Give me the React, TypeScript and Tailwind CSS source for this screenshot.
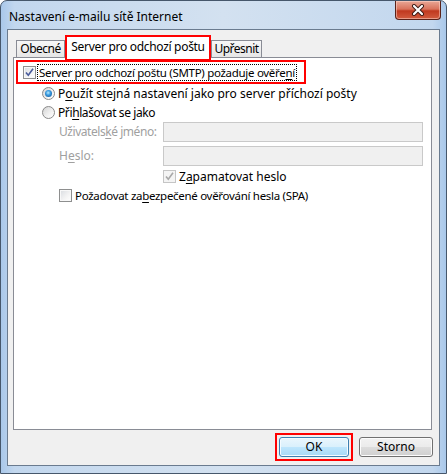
import type { ReactNode } from "react";

const font = { fontFamily: '"Noto Sans", "Open Sans", sans-serif' };

const Check = ({ checked, disabled }: { checked?: boolean; disabled?: boolean }) => (
  <span
    className={`flex h-[13px] w-[13px] shrink-0 items-center justify-center border ${
      disabled
        ? "border-[#c5c5c5] bg-[#f4f4f4]"
        : "border-[#8e8f8f] bg-[linear-gradient(135deg,#d8dbe0_0%,#f4f4f4_60%,#ffffff_100%)] shadow-[inset_0_0_0_1px_#f8f8f8]"
    }`}
  >
    {checked ? (
      <svg width="11" height="11" viewBox="0 0 11 11">
        <path
          d="M2 5.5 L4.3 8.3 L9 1.8"
          fill="none"
          stroke={disabled ? "#a8a8a8" : "#4a5c9c"}
          strokeWidth="1.6"
        />
      </svg>
    ) : null}
  </span>
);

const Radio = ({ checked }: { checked?: boolean }) => (
  <span className="flex h-[13px] w-[13px] shrink-0 items-center justify-center rounded-full border border-[#8a8a8a] bg-[linear-gradient(135deg,#d4d4d4_0%,#f2f2f2_60%,#ffffff_100%)]">
    {checked ? (
      <span className="h-[7px] w-[7px] rounded-full bg-[radial-gradient(circle_at_45%_40%,#b8ecff_0%,#3a9be0_40%,#0d4d8f_100%)]" />
    ) : null}
  </span>
);

const Key = ({ children }: { children: ReactNode }) => <span className="underline underline-offset-2">{children}</span>;

const Tab = ({ children, w }: { children: ReactNode; w: string }) => (
  <div
    className={`flex h-[17px] items-center justify-center border border-b-0 border-[#898c95] bg-[linear-gradient(#f7f7f7,#e6e6e6)] text-[12px] tracking-[-0.5px] whitespace-nowrap text-black ${w}`}
  >
    {children}
  </div>
);

export default function App() {
  return (
    <div
      className="flex h-[474px] w-[447px] flex-col overflow-hidden rounded-t-[7px] border border-[#46576b] bg-[linear-gradient(90deg,#a9c8ea_0%,#c2d7ee_3%,#d3e1f0_50%,#c2d7ee_97%,#a9c8ea_100%)]"
      style={font}
    >
      {/* title bar */}
      <div className="flex h-[28px] shrink-0 items-start">
        <div className="mt-[7px] ml-[8px] text-[12px] text-black">Nastavení e-mailu sítě Internet</div>
        <div className="mr-[5px] ml-auto flex h-[19px] w-[46px] items-center justify-center rounded-b-[4px] border border-t-0 border-[#5a2219] bg-[linear-gradient(#e9a796_0%,#d9735c_45%,#c0391f_55%,#d25c3f_100%)] shadow-[inset_0_0_0_1px_rgba(255,220,210,0.5)]">
          <svg width="14" height="12" viewBox="0 0 14 12">
            <path d="M3 2 L11 10 M11 2 L3 10" stroke="#3b1a14" strokeWidth="4" strokeLinecap="round" />
            <path d="M3 2 L11 10 M11 2 L3 10" stroke="#ffffff" strokeWidth="2.2" strokeLinecap="round" />
          </svg>
        </div>
      </div>

      {/* client area */}
      <div className="mx-[6px] mb-[7px] flex flex-1 flex-col border border-[#6a7b8f] bg-[#f0f0f0] pt-[5px]">
        {/* tabs */}
        <div className="relative z-10 ml-[8px] flex h-[22px] items-end">
          <Tab w="w-[49px]">Obecné</Tab>
          <div className="-mb-[4px] flex h-[26px] w-[146px] shrink-0 items-start justify-center border-2 border-[#ff0000] bg-white pt-[1px] text-[12px] tracking-[-0.3px] whitespace-nowrap text-black">
            Server pro odchozí poštu
          </div>
          <Tab w="w-[51px]">Upřesnit</Tab>
        </div>

        {/* panel */}
        <div className="mr-[7px] ml-[5px] flex h-[373px] flex-col border border-[#898c95] bg-white text-[12px] whitespace-nowrap text-black">
          <div className="mt-[2px] ml-[2px] flex h-[24px] w-[290px] items-center border-2 border-[#ff0000] pl-[5px]">
            <Check checked />
            <span className="ml-[1px] border border-dotted border-black px-[1px] text-[11.5px] leading-[15px] tracking-[-0.3px]">
              Server pro odchozí poštu (SMTP) požaduje ověře<Key>n</Key>í
            </span>
          </div>

          <div className="flex h-[19px] items-center pl-[28px]">
            <Radio checked />
            <span className="ml-[3px]">
              P<Key>o</Key>užít stejná nastavení jako pro server příchozí pošty
            </span>
          </div>
          <div className="flex h-[19px] items-center pl-[28px]">
            <Radio />
            <span className="ml-[3px] tracking-[-0.4px]">
              Při<Key>h</Key>lašovat se jako
            </span>
          </div>

          <div className="flex h-[20px] items-center pl-[45px] text-[#a0a0a0]">
            <span className="w-[104px] shrink-0 tracking-[-0.45px]">
              Uživatels<Key>k</Key>é jméno:
            </span>
            <div className="h-[20px] w-[260px] shrink-0 border border-[#c9c9c9] bg-[#f0f0f0]" />
          </div>
          <div className="mt-[4px] flex h-[20px] items-center pl-[45px] text-[#a0a0a0]">
            <span className="w-[104px] shrink-0">
              H<Key>e</Key>slo:
            </span>
            <div className="h-[20px] w-[260px] shrink-0 border border-[#c9c9c9] bg-[#f0f0f0]" />
          </div>

          <div className="mt-[1px] flex h-[19px] items-center pl-[149px]">
            <Check checked disabled />
            <span className="ml-[3px]">
              Z<Key>a</Key>pamatovat heslo
            </span>
          </div>
          <div className="flex h-[19px] items-center pl-[45px]">
            <Check />
            <span className="ml-[3px] text-[11.5px] tracking-[-0.3px]">
              Požadovat za<Key>b</Key>ezpečené ověřování hesla (SPA)
            </span>
          </div>
        </div>

        {/* buttons */}
        <div className="mt-[3px] flex items-start justify-end pr-[6px]">
          <div className="border-2 border-[#ff0000] p-[2px]">
            <button className="flex h-[20px] w-[70px] items-center justify-center rounded-[3px] border border-[#3c7fb1] bg-[linear-gradient(#eaf6fd_0%,#d9f0fc_50%,#bee6fd_50%,#a7d9f5_100%)] text-[12px] text-black shadow-[inset_0_0_0_1px_#f4fbff]">
              OK
            </button>
          </div>
          <button className="mt-[4px] ml-[6px] flex h-[20px] w-[74px] items-center justify-center rounded-[3px] border border-[#707070] bg-[linear-gradient(#f2f2f2_0%,#ebebeb_50%,#dddddd_50%,#cfcfcf_100%)] text-[12px] text-black shadow-[inset_0_0_0_1px_#fcfcfc]">
            Storno
          </button>
        </div>
      </div>
    </div>
  );
}
